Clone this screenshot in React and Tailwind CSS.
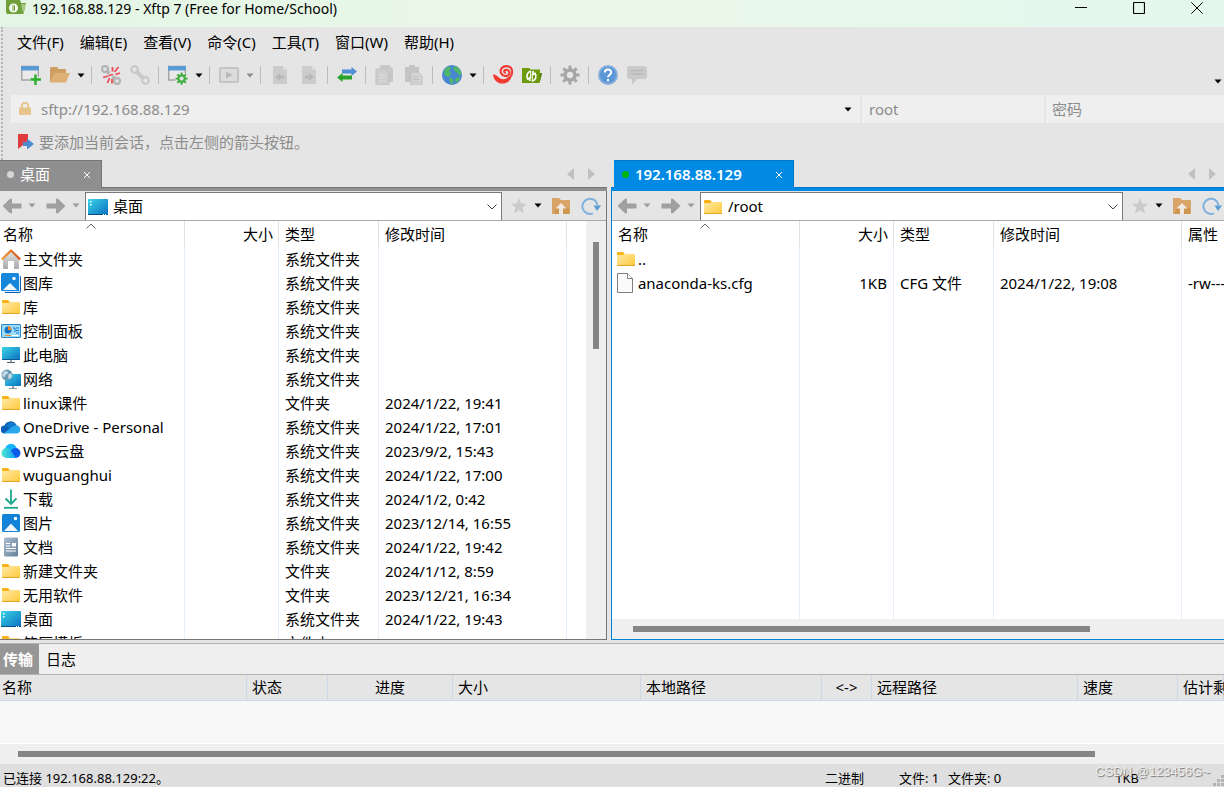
import React from 'react';
import clsx from 'clsx';

const menus = ['文件(F)', '编辑(E)', '查看(V)', '命令(C)', '工具(T)', '窗口(W)', '帮助(H)'];

const localFiles = [
  { icon: HomeIcon, name: '主文件夹', type: '系统文件夹', date: '' },
  { icon: GalleryIcon, name: '图库', type: '系统文件夹', date: '' },
  { icon: FolderIcon, name: '库', type: '系统文件夹', date: '' },
  { icon: ControlPanelIcon, name: '控制面板', type: '系统文件夹', date: '' },
  { icon: ComputerIcon, name: '此电脑', type: '系统文件夹', date: '' },
  { icon: NetworkIcon, name: '网络', type: '系统文件夹', date: '' },
  { icon: FolderIcon, name: 'linux课件', type: '文件夹', date: '2024/1/22, 19:41' },
  { icon: OneDriveIcon, name: 'OneDrive - Personal', type: '系统文件夹', date: '2024/1/22, 17:01' },
  { icon: WpsCloudIcon, name: 'WPS云盘', type: '系统文件夹', date: '2023/9/2, 15:43' },
  { icon: FolderIcon, name: 'wuguanghui', type: '系统文件夹', date: '2024/1/22, 17:00' },
  { icon: DownloadIcon, name: '下载', type: '系统文件夹', date: '2024/1/2, 0:42' },
  { icon: PictureIcon, name: '图片', type: '系统文件夹', date: '2023/12/14, 16:55' },
  { icon: DocumentIcon, name: '文档', type: '系统文件夹', date: '2024/1/22, 19:42' },
  { icon: FolderIcon, name: '新建文件夹', type: '文件夹', date: '2024/1/12, 8:59' },
  { icon: FolderIcon, name: '无用软件', type: '文件夹', date: '2023/12/21, 16:34' },
  { icon: DesktopIcon, name: '桌面', type: '系统文件夹', date: '2024/1/22, 19:43' },
  { icon: FolderIcon, name: '简历模板', type: '文件夹', date: '2024/1/20, 15:30' },
];

const remoteFiles = [
  { icon: FolderIcon, name: '..', size: '', type: '', date: '', attr: '' },
  { icon: FileIcon, name: 'anaconda-ks.cfg', size: '1KB', type: 'CFG 文件', date: '2024/1/22, 19:08', attr: '-rw-------' },
];

const transferColumns = [
  { label: '名称', col: 'w-[247px]', cell: 'pl-0.5' },
  { label: '状态', col: 'w-[81px]', cell: 'pl-[5px]' },
  { label: '进度', col: 'w-[125px]', cell: 'text-center' },
  { label: '大小', col: 'w-[188px]', cell: 'pl-[5px]' },
  { label: '本地路径', col: 'w-[181px]', cell: 'pl-[5px]' },
  { label: '<->', col: 'w-[50px]', cell: 'text-center' },
  { label: '远程路径', col: 'w-[206px]', cell: 'pl-[5px]' },
  { label: '速度', col: 'w-[100px]', cell: 'pl-[5px]' },
  { label: '估计剩余时间', col: '', cell: 'pl-[5px]' },
];

/* ---------- list icons ---------- */

function FolderIcon() {
  return (
    <svg viewBox="0 0 20 20" className="w-5 h-5 shrink-0">
      <defs>
        <linearGradient id="folder" x1="0" y1="0" x2="1" y2="1">
          <stop offset="0" stopColor="#ffe9a6" />
          <stop offset="1" stopColor="#ffca3a" />
        </linearGradient>
      </defs>
      <path d="M1 4a1 1 0 0 1 1-1h5l2 2-1 2H1z" fill="#f9b115" />
      <path d="M1 6h6l1.500-1H18a1 1 0 0 1 1 1v11H1z" fill="url(#folder)" />
      <path d="M1 16h18v1H1z" fill="#e5a52a" />
    </svg>
  );
}

function FileIcon() {
  return (
    <svg viewBox="0 0 20 20" className="w-5 h-5 shrink-0">
      <path d="M1.500 0.500h10l5 5v14h-15z" fill="#fafafa" stroke="#7f7f7f" />
      <path d="M11.500 0.500v5h5" fill="#fff" stroke="#7f7f7f" />
    </svg>
  );
}

function HomeIcon() {
  return (
    <svg viewBox="0 0 20 20" className="w-5 h-5 shrink-0">
      <defs>
        <linearGradient id="home-wall" x1="0" y1="0" x2="0" y2="1">
          <stop offset="0" stopColor="#e3e3e3" />
          <stop offset="1" stopColor="#a9a9a9" />
        </linearGradient>
        <linearGradient id="home-roof" x1="0" y1="0" x2="1" y2="0">
          <stop offset="0" stopColor="#f29a3d" />
          <stop offset="1" stopColor="#d9501c" />
        </linearGradient>
      </defs>
      <path d="M2 10l8-8 8 8v9a1 1 0 0 1-1 1h-4v-8H7v8H3a1 1 0 0 1-1-1z" fill="url(#home-wall)" />
      <path d="M0.800 10.500L10 1.500l9.200 9" fill="none" stroke="url(#home-roof)" strokeWidth="2.200" strokeLinejoin="round" />
    </svg>
  );
}

function PictureIcon() {
  return (
    <svg viewBox="0 0 20 20" className="w-5 h-5 shrink-0">
      <rect x="1" y="1" width="18" height="18" rx="1.500" fill="#1283d6" />
      <path d="M3 18l7-7.500 7 7.500z" fill="#f2f8fd" />
      <circle cx="14.500" cy="5.500" r="1.700" fill="#fff" />
    </svg>
  );
}

function GalleryIcon() {
  return (
    <svg viewBox="0 0 20 20" className="w-5 h-5 shrink-0">
      <path d="M4 3h15a1 1 0 0 1 1 1v14a2 2 0 0 1-2 2H4z" fill="#0c5fae" />
      <path d="M18.500 2v16.500H3" fill="none" stroke="#d8ecfa" />
      <rect x="0" y="0" width="18" height="18" rx="1.500" fill="#1687db" />
      <path d="M2 17l7-7 7 7z" fill="#f2f8fd" />
      <circle cx="13" cy="5.500" r="1.700" fill="#fff" />
    </svg>
  );
}

function ControlPanelIcon() {
  return (
    <svg viewBox="0 0 20 20" className="w-5 h-5 shrink-0">
      <rect x="0.500" y="3.500" width="19" height="13" rx="0.500" fill="#9bdcf8" stroke="#2a86c8" />
      <circle cx="7" cy="9" r="3.500" fill="#1574c4" />
      <path d="M7 9V5a4 4 0 0 1 3.500 4z" fill="#f08a24" />
      <path d="M12 7h2v4M15 7h3M15 9.500h3M15 12h3" fill="none" stroke="#1574c4" />
      <path d="M4 14.500h6" stroke="#f08a24" />
      <path d="M11 14.500h6" stroke="#fff" />
    </svg>
  );
}

function ScreenGradient({ id }) {
  return (
    <defs>
      <linearGradient id={id} x1="0" y1="0" x2="1" y2="1">
        <stop offset="0" stopColor="#3ad4e6" />
        <stop offset="1" stopColor="#0b6fc0" />
      </linearGradient>
    </defs>
  );
}

function ComputerIcon() {
  return (
    <svg viewBox="0 0 20 20" className="w-5 h-5 shrink-0">
      <ScreenGradient id="computer" />
      <rect x="1" y="2" width="18" height="13" rx="0.800" fill="url(#computer)" />
      <path d="M1 14.500h18" stroke="#0a5a94" />
      <path d="M9 15h2v2H9z" fill="#9aa3aa" />
      <path d="M6 17h8v1H6z" fill="#59636b" />
    </svg>
  );
}

function NetworkIcon() {
  return (
    <svg viewBox="0 0 20 20" className="w-5 h-5 shrink-0">
      <ScreenGradient id="network" />
      <rect x="4" y="5" width="16" height="12" rx="0.800" fill="url(#network)" />
      <path d="M11 17h2v2h-2zM8 19h8v1H8z" fill="#8e979e" />
      <circle cx="6" cy="6" r="5.500" fill="#6d9ab5" />
      <path d="M3 2.500c2-1 4 0 4 1.500S4 5 4 7s-2 1-3-1zM8 5c2-1 3 0 3 2s-2 3-3 3-1-4 0-5z" fill="#c3d9e4" />
    </svg>
  );
}

function OneDriveIcon() {
  return (
    <svg viewBox="0 0 20 20" className="w-5 h-5 shrink-0">
      <path d="M4 16.500a4 4 0 0 1-.600-8A6.500 6.500 0 0 1 15 7.500L9 13z" fill="#0a5fb4" />
      <path d="M5.500 8.500A6 6 0 0 1 16 8.500l-6 5z" fill="#1379d0" />
      <path d="M3 16l9-6.500a5 5 0 0 1 4-1 4.100 4.100 0 0 1 0 8H4.500a3 3 0 0 1-1.500-.500z" fill="#28a8ea" />
    </svg>
  );
}

function WpsCloudIcon() {
  return (
    <svg viewBox="0 0 20 20" className="w-5 h-5 shrink-0">
      <defs>
        <linearGradient id="wps" x1="0" y1="0" x2="1" y2="0">
          <stop offset="0" stopColor="#4fe8cf" />
          <stop offset="1" stopColor="#0f9df5" />
        </linearGradient>
      </defs>
      <circle cx="10" cy="8.500" r="5.800" fill="#16b4fa" />
      <circle cx="14.500" cy="12" r="5" fill="#0f5be8" />
      <path d="M5.500 7a5 5 0 0 1 4.500 3l5 7H5.500a5 5 0 0 1 0-10z" fill="url(#wps)" />
    </svg>
  );
}

function DownloadIcon() {
  return (
    <svg viewBox="0 0 20 20" className="w-5 h-5 shrink-0" fill="none" stroke="#1aa98c" strokeWidth="1.800">
      <path d="M10 0.500v14M4.500 9.500l5.500 5.500 5.500-5.500" />
      <path d="M3 18.800h14" />
    </svg>
  );
}

function DocumentIcon() {
  return (
    <svg viewBox="0 0 20 20" className="w-5 h-5 shrink-0">
      <defs>
        <linearGradient id="doc" x1="0" y1="0" x2="1" y2="1">
          <stop offset="0" stopColor="#aebfd0" />
          <stop offset="1" stopColor="#64809c" />
        </linearGradient>
      </defs>
      <rect x="3" y="0.500" width="14" height="19" rx="1" fill="url(#doc)" />
      <path d="M5 6.500h4M5 9h4M5 11.500h10M5 14h10" stroke="#fff" strokeWidth="1.200" />
      <path d="M11 6h4v3.500h-4z" fill="#fff" />
    </svg>
  );
}

function DesktopIcon() {
  return (
    <svg viewBox="0 0 20 20" className="w-5 h-5 shrink-0">
      <ScreenGradient id="desktop" />
      <rect x="0" y="2" width="20" height="16" rx="1" fill="url(#desktop)" />
      <path d="M0 17.500h20" stroke="#0a4f86" />
      <path d="M2 4h1.500v1.500H2zM2 7h1.500v1.500H2zM15 17h1v1h-1zM17 17h1v1h-1z" fill="#fff" />
    </svg>
  );
}

/* ---------- small shapes ---------- */

function Triangle({ className }) {
  return (
    <svg viewBox="0 0 8 5" className={clsx('w-2 h-[5px] shrink-0', className)}>
      <path d="M0.500 0.500h7L4 4.500z" fill="currentColor" />
    </svg>
  );
}

function Cross() {
  return (
    <svg viewBox="0 0 8 8" className="w-2 h-2" stroke="currentColor">
      <path d="M1 1l6 6M7 1l-6 6" />
    </svg>
  );
}

function BackArrow({ flip }) {
  return (
    <svg viewBox="0 0 20 16" className={clsx('w-5 h-4', flip && '-scale-x-100')}>
      <path d="M0.500 8L8 0.800h2V5.500h9.500v5H10v4.700H8z" fill="#a0a0a0" />
    </svg>
  );
}

/* ---------- toolbar icons ---------- */

function GearShape({ color, hole }) {
  return (
    <g>
      <g stroke={color} strokeWidth="3">
        <path d="M10 0.500v19M0.500 10h19M3.300 3.300l13.400 13.400M16.700 3.300L3.300 16.700" />
      </g>
      <circle cx="10" cy="10" r="6.700" fill={color} />
      <circle cx="10" cy="10" r="3.200" fill={hole} />
    </g>
  );
}

function WindowFrame() {
  return (
    <g>
      <path d="M0.700 1.500h16.600v13.500H0.700z" fill="#e9e9e9" stroke="#a3a3a3" strokeWidth="1.400" />
      <path d="M0 1h18v4.500H0z" fill="#5b9bd5" />
    </g>
  );
}

const toolIcons = {
  newSession: (
    <g>
      <WindowFrame />
      <path d="M14 9v11M9 14.500h11" stroke="#e5e5e5" strokeWidth="5" />
      <path d="M14.500 9.500V20M9.500 14.500H20" stroke="#2bae2b" strokeWidth="2.400" />
    </g>
  ),
  open: (
    <g>
      <path d="M0 3.500L1 2h6l1.500 2H16v4H5L1 17H0z" fill="#cf9f62" />
      <path d="M4.500 8H20l-4 9.500H0.500z" fill="#dfb076" />
    </g>
  ),
  disconnect: (
    <g fill="none">
      <circle cx="4" cy="4" r="3" stroke="#b5b5b5" strokeWidth="2.400" />
      <circle cx="16" cy="16" r="3" stroke="#b5b5b5" strokeWidth="2.400" />
      <path d="M6 6.500l2.500 2M11.500 11.500l2.500 2.500" stroke="#b5b5b5" strokeWidth="3.600" />
      <path d="M7.500 11L2 12.500M8.500 13l-2 5M11 14v4.500M11.500 6.500V2M13.500 7l4-5M14.500 9.500l4.500-1.500M8 10.500l4-1" stroke="#ee4b55" strokeWidth="1.800" />
    </g>
  ),
  connect: (
    <g fill="none" stroke="#c8c8c8">
      <circle cx="4.500" cy="4.500" r="3.300" strokeWidth="2.200" />
      <circle cx="15.500" cy="15.500" r="3.300" strokeWidth="2.200" />
      <path d="M7 7l6 6" strokeWidth="4" />
    </g>
  ),
  properties: (
    <g>
      <WindowFrame />
      <circle cx="13.500" cy="13.500" r="6.500" fill="#e5e5e5" />
      <g transform="translate(7.200 7.200) scale(0.640)">
        <GearShape color="#3fae3f" hole="#e5e5e5" />
      </g>
    </g>
  ),
  play: (
    <g>
      <rect x="1" y="3" width="18" height="14" rx="1" fill="#dcdcdc" stroke="#c4c4c4" strokeWidth="2" />
      <path d="M7 6.500l7 3.500-7 3.500z" fill="#bababa" />
    </g>
  ),
  pageLeft: (
    <g>
      <path d="M3 1h10l4 4v14H3z" fill="#cccccc" />
      <path d="M13 1v4h4z" fill="#dcdcdc" />
      <path d="M5 12l5-4v2.500h4v3h-4V16z" fill="#b8b8b8" />
    </g>
  ),
  pageRight: (
    <g>
      <path d="M3 1h10l4 4v14H3z" fill="#cccccc" />
      <path d="M13 1v4h4z" fill="#dcdcdc" />
      <path d="M15 12l-5-4v2.500H6v3h4V16z" fill="#b8b8b8" />
    </g>
  ),
  transfer: (
    <g>
      <path d="M20 6.500L14.500 2v2.500H5v4h9.500V11z" fill="#4f8fd3" />
      <path d="M0 12.500L5.500 8v2.500H15v4H5.500V17z" fill="#2ba32b" />
    </g>
  ),
  copy: (
    <g>
      <path d="M5 0h9l4 4v13H5z" fill="#c8c8c8" />
      <path d="M1 4h9l4 4v12H1z" fill="#cecece" stroke="#c0c0c0" />
      <path d="M4 10h7M4 13h7M4 16h7" stroke="#dedede" />
    </g>
  ),
  paste: (
    <g>
      <path d="M1 2h4V0h6v2h4v15H1z" fill="#c4c4c4" />
      <path d="M7 7h7l4 4v9H7z" fill="#d4d4d4" stroke="#c0c0c0" />
      <path d="M9 12h6M9 14.500h6M9 17h6" stroke="#c0c0c0" />
    </g>
  ),
  globe: (
    <g>
      <circle cx="10" cy="10" r="10" fill="#4887d0" />
      <path d="M3 4c2-2 5-2.500 6-1.500s-1 2-2 3 2 1 2 3-1 1.500-1.500 2.500S6 12 4 11 1.500 6 3 4zM12 1c3 0 6 3 7 6s-1 4-2 3-1-2-3-3-3-5-2-6zM8 13c2 0 4 1 3.500 3S10 19.500 9 19 7 13 8 13zM14 13c1-1 4-1 4 0s-2 4-3.500 4.500S13 14 14 13z" fill="#4fb868" />
    </g>
  ),
  xshell: (
    <g>
      <path d="M0 9.500c1.500-.500 4 1 6.500 3.500 3 2 7 1.500 9-1.500l2.500 2C15.500 17.500 11.500 19 8 18.500 4 18 .500 14.500 0 9.500z" fill="#f03a32" />
      <path d="M16.500 13c4-4.500 3.500-11-2-11.800C9.500.500 6.500 4.500 8 8s6.500 4.200 8 1.300S14.500 4 12.300 5s-.800 3 .700 2.400" fill="none" stroke="#f03a32" strokeWidth="2.100" />
    </g>
  ),
  xftp: (
    <g>
      <path d="M0 3h7l2 1.500h9V8h2l-2.500 10H0z" fill="#6d9b0c" />
      <path d="M18 8h2l-2.500 10z" fill="#567d08" />
      <path d="M9 6.200A5 5 0 0 0 5.800 14l2-1.200V16M9.800 16.200A5 5 0 0 0 13 8.300l-2 1.200V6" fill="none" stroke="#fff" strokeWidth="1.700" />
      <path d="M8.700 6v7M10.300 9v7" stroke="#fff" strokeWidth="1" />
    </g>
  ),
  options: <GearShape color="#a6a6a6" hole="#e5e5e5" />,
  help: (
    <g>
      <circle cx="10" cy="10" r="9" fill="#5b97d6" stroke="#86aedb" strokeWidth="2" />
      <path d="M6.800 7.500C6.800 3.500 13.200 3.500 13.200 7.300c0 2.400-3.200 2.500-3.200 5M10 14v2.200" fill="none" stroke="#fff" strokeWidth="2" />
    </g>
  ),
  feedback: (
    <g>
      <path d="M2 1h16a2 2 0 0 1 2 2v9a2 2 0 0 1-2 2h-8l-5 6v-6H2a2 2 0 0 1-2-2V3a2 2 0 0 1 2-2z" fill="#cacaca" />
      <path d="M3.500 5.500h13M3.500 9h13" stroke="#b8b8b8" strokeWidth="1.500" />
    </g>
  ),
};

const toolbar = [
  [{ id: 'newSession', label: '新建' }, { id: 'open', label: '打开', arrow: 'text-black' }],
  [{ id: 'disconnect', label: '断开' }, { id: 'connect', label: '重新连接' }],
  [{ id: 'properties', label: '属性', arrow: 'text-black' }],
  [{ id: 'play', label: '执行', arrow: 'text-[#8a8a8a]' }],
  [{ id: 'pageLeft', label: '向左传输' }, { id: 'pageRight', label: '向右传输' }],
  [{ id: 'transfer', label: '同步' }],
  [{ id: 'copy', label: '复制' }, { id: 'paste', label: '粘贴' }],
  [{ id: 'globe', label: '语言', arrow: 'text-black' }],
  [{ id: 'xshell', label: 'Xshell' }, { id: 'xftp', label: 'Xftp' }],
  [{ id: 'options', label: '选项' }],
  [{ id: 'help', label: '帮助' }, { id: 'feedback', label: '反馈' }],
];

/* ---------- window parts ---------- */

function TitleBar() {
  return (
    <header className="flex items-start h-[27px] shrink-0 overflow-hidden bg-linear-to-r from-[#e4f5e6] via-[#eaf8e8] to-[#e4f7ef]">
      <svg viewBox="0 0 20 15" className="w-5 h-[15px] ml-1.5 mr-1.5">
        <path d="M0 0h14l1 3h5l-2.500 11H1L0 12z" fill="#6f9e3a" />
        <path d="M15 4h5l-3 9.500z" fill="#a9cb86" />
        <circle cx="7.500" cy="8" r="4.500" fill="#f3f9ec" />
        <path d="M7 5v6M8.500 5.500v5" stroke="#6f9e3a" />
      </svg>
      <h1 className="text-[14px] leading-[18px]">192.168.88.129 - Xftp 7 (Free for Home/School)</h1>
      <div className="ml-auto flex gap-[46px] pt-0.5 pr-[21px]">
        <button aria-label="最小化">
          <svg viewBox="0 0 12 12" className="w-3 h-3" stroke="#000"><path d="M0 5.500h12" /></svg>
        </button>
        <button aria-label="最大化">
          <svg viewBox="0 0 12 12" className="w-3 h-3" stroke="#000" fill="none"><rect x="0.500" y="0.500" width="11" height="11" rx="1" strokeWidth="1.200" /></svg>
        </button>
        <button aria-label="关闭">
          <svg viewBox="0 0 12 12" className="w-3 h-3" stroke="#000"><path d="M0.300 0.300l11.400 11.400M11.700 0.300L0.300 11.700" /></svg>
        </button>
      </div>
    </header>
  );
}

function Toolbar() {
  return (
    <div className="flex items-center h-9 pb-1 pl-[13px]">
      {toolbar.map((group, i) => (
        <React.Fragment key={group[0].id}>
          {i > 0 && (
            <span className="w-[9px] flex justify-center">
              <span className="w-px h-[18px] bg-[#bdbdbd]"></span>
            </span>
          )}
          {group.map((tool) => (
            <React.Fragment key={tool.id}>
              <button aria-label={tool.label} className="w-[29px] h-7 flex items-center justify-center">
                <svg viewBox="0 0 20 20" className="w-5 h-5">{toolIcons[tool.id]}</svg>
              </button>
              {tool.arrow && (
                <button aria-label={tool.label + '菜单'} className={clsx('w-[13px] h-7 flex items-center justify-center', tool.arrow)}>
                  <Triangle />
                </button>
              )}
            </React.Fragment>
          ))}
        </React.Fragment>
      ))}
      <button aria-label="更多" className="ml-auto mr-0.5 pt-3">
        <Triangle />
      </button>
    </div>
  );
}

function AddressBar() {
  return (
    <div className="flex gap-0.5 h-7 pl-2 text-[15px] text-[#8c8c8c]">
      <div className="flex-1 min-w-0 flex items-center bg-[#efefef] px-2">
        <svg viewBox="0 0 12 14" className="w-3 h-3.5 mr-2.5">
          <path d="M2.800 6V4a3.200 3.200 0 0 1 6.400 0v2" fill="none" stroke="#e8c48d" strokeWidth="1.800" />
          <rect x="0" y="5.500" width="12" height="7.500" rx="1" fill="#e8c48d" />
        </svg>
        <input aria-label="地址" defaultValue="sftp://192.168.88.129" className="flex-1 min-w-0 bg-transparent outline-none" />
        <button aria-label="历史地址" className="text-black"><Triangle /></button>
      </div>
      <input aria-label="用户名" defaultValue="root" className="w-[182px] min-w-0 bg-[#efefef] px-[7px] outline-none" />
      <input aria-label="密码" type="password" placeholder="密码" className="w-[178px] min-w-0 bg-[#efefef] px-1.5 outline-none placeholder:text-[#8c8c8c]" />
    </div>
  );
}

function FileHeader({ label, className, sorted, line = true }) {
  return (
    <th className={clsx('relative h-[26px] py-0 font-normal', line && 'border-r border-[#e2e2e2]', className || 'px-1.5')}>
      {sorted && (
        <svg viewBox="0 0 10 6" className="absolute left-1/2 top-0.5 -translate-x-1/2 w-2.5 h-1.5" fill="none" stroke="#666">
          <path d="M0.500 5.500L5 1l4.500 4.500" />
        </svg>
      )}
      {label}
    </th>
  );
}

function FileTable({ files, remote }) {
  const cell = 'border-r border-[#e6f0fa] px-1.5 py-0';
  return (
    <table className="table-fixed border-separate border-spacing-0 w-full h-full text-[15px] leading-6 whitespace-nowrap">
      <colgroup>
        <col className="w-[188px]" />
        <col className="w-[94px]" />
        <col className="w-[100px]" />
        <col className="w-[188px]" />
        <col />
      </colgroup>
      <thead>
        <tr className="text-left">
          <FileHeader label="名称" sorted />
          <FileHeader label="大小" className="text-right px-[5px]" />
          <FileHeader label="类型" />
          <FileHeader label="修改时间" />
          <FileHeader label={remote ? '属性' : ''} line={false} />
        </tr>
      </thead>
      <tbody>
        {files.map((f) => (
          <tr key={f.name} className="h-6">
            <td className="border-r border-[#e6f0fa] pl-1 py-0">
              <div className="flex items-center gap-0.5 h-6">
                <f.icon />
                <span>{f.name}</span>
              </div>
            </td>
            <td className={clsx(cell, 'text-right')}>{f.size}</td>
            <td className={cell}>{f.type}</td>
            <td className={cell}>{f.date}</td>
            <td className="px-1.5 py-0">{f.attr}</td>
          </tr>
        ))}
        <tr aria-hidden="true">
          <td className={cell}></td>
          <td className={cell}></td>
          <td className={cell}></td>
          <td className={cell}></td>
          <td></td>
        </tr>
      </tbody>
    </table>
  );
}

function Pane({ title, path, pathIcon: PathIcon, active, children }) {
  return (
    <section className="flex flex-col min-w-0 min-h-0">
      <div className="flex h-[27px] shrink-0 pl-[3px]">
        <div
          className={clsx(
            'relative -mb-px flex items-center pl-2 pr-2.5 border-t border-r text-white text-[15px]',
            active ? 'bg-[#008ae4] border-[#0079cc] font-semibold' : 'bg-[#8f8f8f] border-[#767676]'
          )}
        >
          <span className={clsx('w-[7px] h-[7px] rounded-full mr-1.5', active ? 'bg-[#00b400]' : 'bg-[#d6d6d6]')}></span>
          <span className="mr-[33px]">{title}</span>
          <button aria-label="关闭标签"><Cross /></button>
        </div>
        <div className="ml-auto flex items-center gap-3.5 pr-3 text-[#c0c0c0]">
          <button aria-label="上一个标签">
            <svg viewBox="0 0 7 12" className="w-[7px] h-3" fill="currentColor"><path d="M7 0v12L0 6z" /></svg>
          </button>
          <button aria-label="下一个标签">
            <svg viewBox="0 0 7 12" className="w-[7px] h-3" fill="currentColor"><path d="M0 0v12l7-6z" /></svg>
          </button>
        </div>
      </div>
      <div className={clsx('h-1 shrink-0 border-t', active ? 'bg-[#008ae4] border-[#0079cc]' : 'bg-[#8f8f8f] border-[#767676]')}></div>
      <div className={clsx('flex-1 min-h-0 flex flex-col border border-t-0', active ? 'border-[#0082d6]' : 'border-[#767676]')}>
        <div className="flex items-center h-[30px] shrink-0 px-[5px] border-b border-[#a8a8a8] text-[#9c9c9c]">
          <button aria-label="后退"><BackArrow /></button>
          <button aria-label="后退记录" className="ml-1.5"><Triangle /></button>
          <button aria-label="前进" className="ml-2.5"><BackArrow flip /></button>
          <button aria-label="前进记录" className="ml-1.5 mr-[5px]"><Triangle /></button>
          <div className="flex-1 min-w-0 self-stretch mt-px flex items-center border border-b-0 border-[#7a7a7a] bg-white pl-0.5 pr-1 text-black">
            <PathIcon />
            <input aria-label="路径" defaultValue={path} className="flex-1 min-w-0 ml-[5px] text-[15px] outline-none" />
            <button aria-label="选择路径">
              <svg viewBox="0 0 10 6" className="w-2.5 h-1.5" fill="none" stroke="#444"><path d="M0.500 0.500L5 5l4.500-4.500" /></svg>
            </button>
          </div>
          <button aria-label="收藏" className="ml-2">
            <svg viewBox="0 0 18 18" className="w-[18px] h-[18px]"><path d="M9 1l2.300 5.500 5.700.400-4.400 3.700 1.400 5.900L9 13.300l-5 3.200 1.400-5.900L1 6.900l5.700-.400z" fill="#cbcbcb" /></svg>
          </button>
          <button aria-label="收藏列表" className="ml-1.5 text-black"><Triangle /></button>
          <button aria-label="上级文件夹" className="ml-2.5">
            <svg viewBox="0 0 18 18" className="w-[18px] h-[18px]">
              <path d="M0 1h7l2 2h9v14H0z" fill="#d9a468" />
              <path d="M2 17l1-6h14v6z" fill="#cf9650" />
              <path d="M9 6l5.500 5.500H11V17H7v-5.500H3.500z" fill="#f0e9e0" />
            </svg>
          </button>
          <button aria-label="刷新" className="ml-[11px]">
            <svg viewBox="0 0 20 18" className="w-5 h-[18px]">
              <path d="M12 16.300A7.600 7.600 0 1 1 16.500 8" fill="none" stroke="#7fb0de" strokeWidth="2" />
              <path d="M12.500 8.500H20L16 14z" fill="#5b9bd5" />
            </svg>
          </button>
        </div>
        <div className="flex-1 min-h-0 flex flex-col bg-white">{children}</div>
      </div>
    </section>
  );
}

function TransferPanel() {
  return (
    <section className="shrink-0 mt-[3px] border-t border-[#b4b4b4] bg-[#efefef] text-[15px]">
      <div className="flex h-[30px]">
        <button className="w-[39px] pl-[3px] text-left bg-[#969696] text-white font-semibold whitespace-nowrap">传输</button>
        <button className="px-[7px]">日志</button>
      </div>
      <div className="overflow-hidden h-[70px] bg-[#f8f8f8] border-t border-[#b4b4b4] border-b border-b-white">
        <table className="table-fixed border-separate border-spacing-0 w-full whitespace-nowrap">
          <colgroup>
            {transferColumns.map((c) => <col key={c.label} className={c.col} />)}
          </colgroup>
          <thead>
            <tr className="bg-[#e5e5e5] text-left">
              {transferColumns.map((c) => (
                <th key={c.label} className={clsx('h-[26px] py-0 pr-0 leading-[25px] font-normal border-b border-r border-[#ccd8e8]', c.cell)}>{c.label}</th>
              ))}
            </tr>
          </thead>
        </table>
      </div>
      <div className="h-5 flex items-center pl-[18px] pr-[129px]">
        <div className="flex-1 h-1.5 bg-[#858585]"></div>
      </div>
    </section>
  );
}

function StatusBar() {
  return (
    <footer className="relative shrink-0 flex items-end h-[23px] pl-[3px] bg-[#dfdfdf] text-[13px] leading-[18px]">
      <span className="flex-1">已连接 192.168.88.129:22。</span>
      <span className="w-[74px]">二进制</span>
      <span className="w-[49px]">文件: 1</span>
      <span className="w-[167px]">文件夹: 0</span>
      <span className="w-[109px]">1KB</span>
      <svg viewBox="0 0 12 12" className="absolute right-0 bottom-0 w-3 h-3" fill="#b4b4b4">
        <path d="M9 0h3v3H9zM5 4h3v3H5zM9 4h3v3H9zM1 8h3v3H1zM5 8h3v3H5zM9 8h3v3H9z" />
      </svg>
      <span className="absolute right-3.5 bottom-1.5 font-['Liberation_Sans'] text-[13px] text-[#ececec] [text-shadow:1px_1px_1px_#777]">CSDN @123456G~</span>
    </footer>
  );
}

export default function App() {
  return (
    <div className="h-screen flex flex-col overflow-hidden bg-[#e5e5e5] text-black font-['Noto_Sans','Noto_Sans_CJK_SC',sans-serif]">
      <TitleBar />
      <div className="flex h-[133px] shrink-0">
        <div className="w-[3px] border-r-2 border-dotted border-[#b4b4b4]"></div>
        <div className="flex-1 min-w-0">
          <nav className="flex items-center gap-4 h-8 pb-0.5 pl-3.5 text-[15px] whitespace-nowrap">
            {menus.map((m) => <button key={m}>{m}</button>)}
          </nav>
          <Toolbar />
          <AddressBar />
          <div className="flex items-center h-9 pl-3.5 pt-0.5 text-[15px] text-[#8c8c8c]">
            <svg viewBox="0 0 18 16" className="w-[18px] h-4 mr-1">
              <path d="M1 0h10v9l-5 2-5 4z" fill="#e23b3f" />
              <path d="M6 8h4V4.500l7 5.500-7 5.500V12H6z" fill="#4d8bd0" />
            </svg>
            要添加当前会话，点击左侧的箭头按钮。
          </div>
        </div>
      </div>
      <main className="flex-1 min-h-0 grid grid-cols-[99fr_100fr] grid-rows-1 gap-1 -mx-1">
        <Pane title="桌面" path="桌面" pathIcon={DesktopIcon}>
          <div className="flex-1 min-h-0 flex">
            <div className="flex-1 min-w-0 overflow-hidden">
              <FileTable files={localFiles} />
            </div>
            <div className="w-5 shrink-0 bg-[#efefef] flex justify-center pt-[21px]">
              <div className="w-1.5 h-[27%] bg-[#858585]"></div>
            </div>
          </div>
        </Pane>
        <Pane title="192.168.88.129" path="/root" pathIcon={FolderIcon} active>
          <div className="flex-1 min-h-0 overflow-hidden">
            <FileTable files={remoteFiles} remote />
          </div>
          <div className="h-5 shrink-0 bg-[#efefef] flex items-center pl-[21px]">
            <div className="w-[77%] h-1.5 bg-[#858585]"></div>
          </div>
        </Pane>
      </main>
      <TransferPanel />
      <StatusBar />
    </div>
  );
}
